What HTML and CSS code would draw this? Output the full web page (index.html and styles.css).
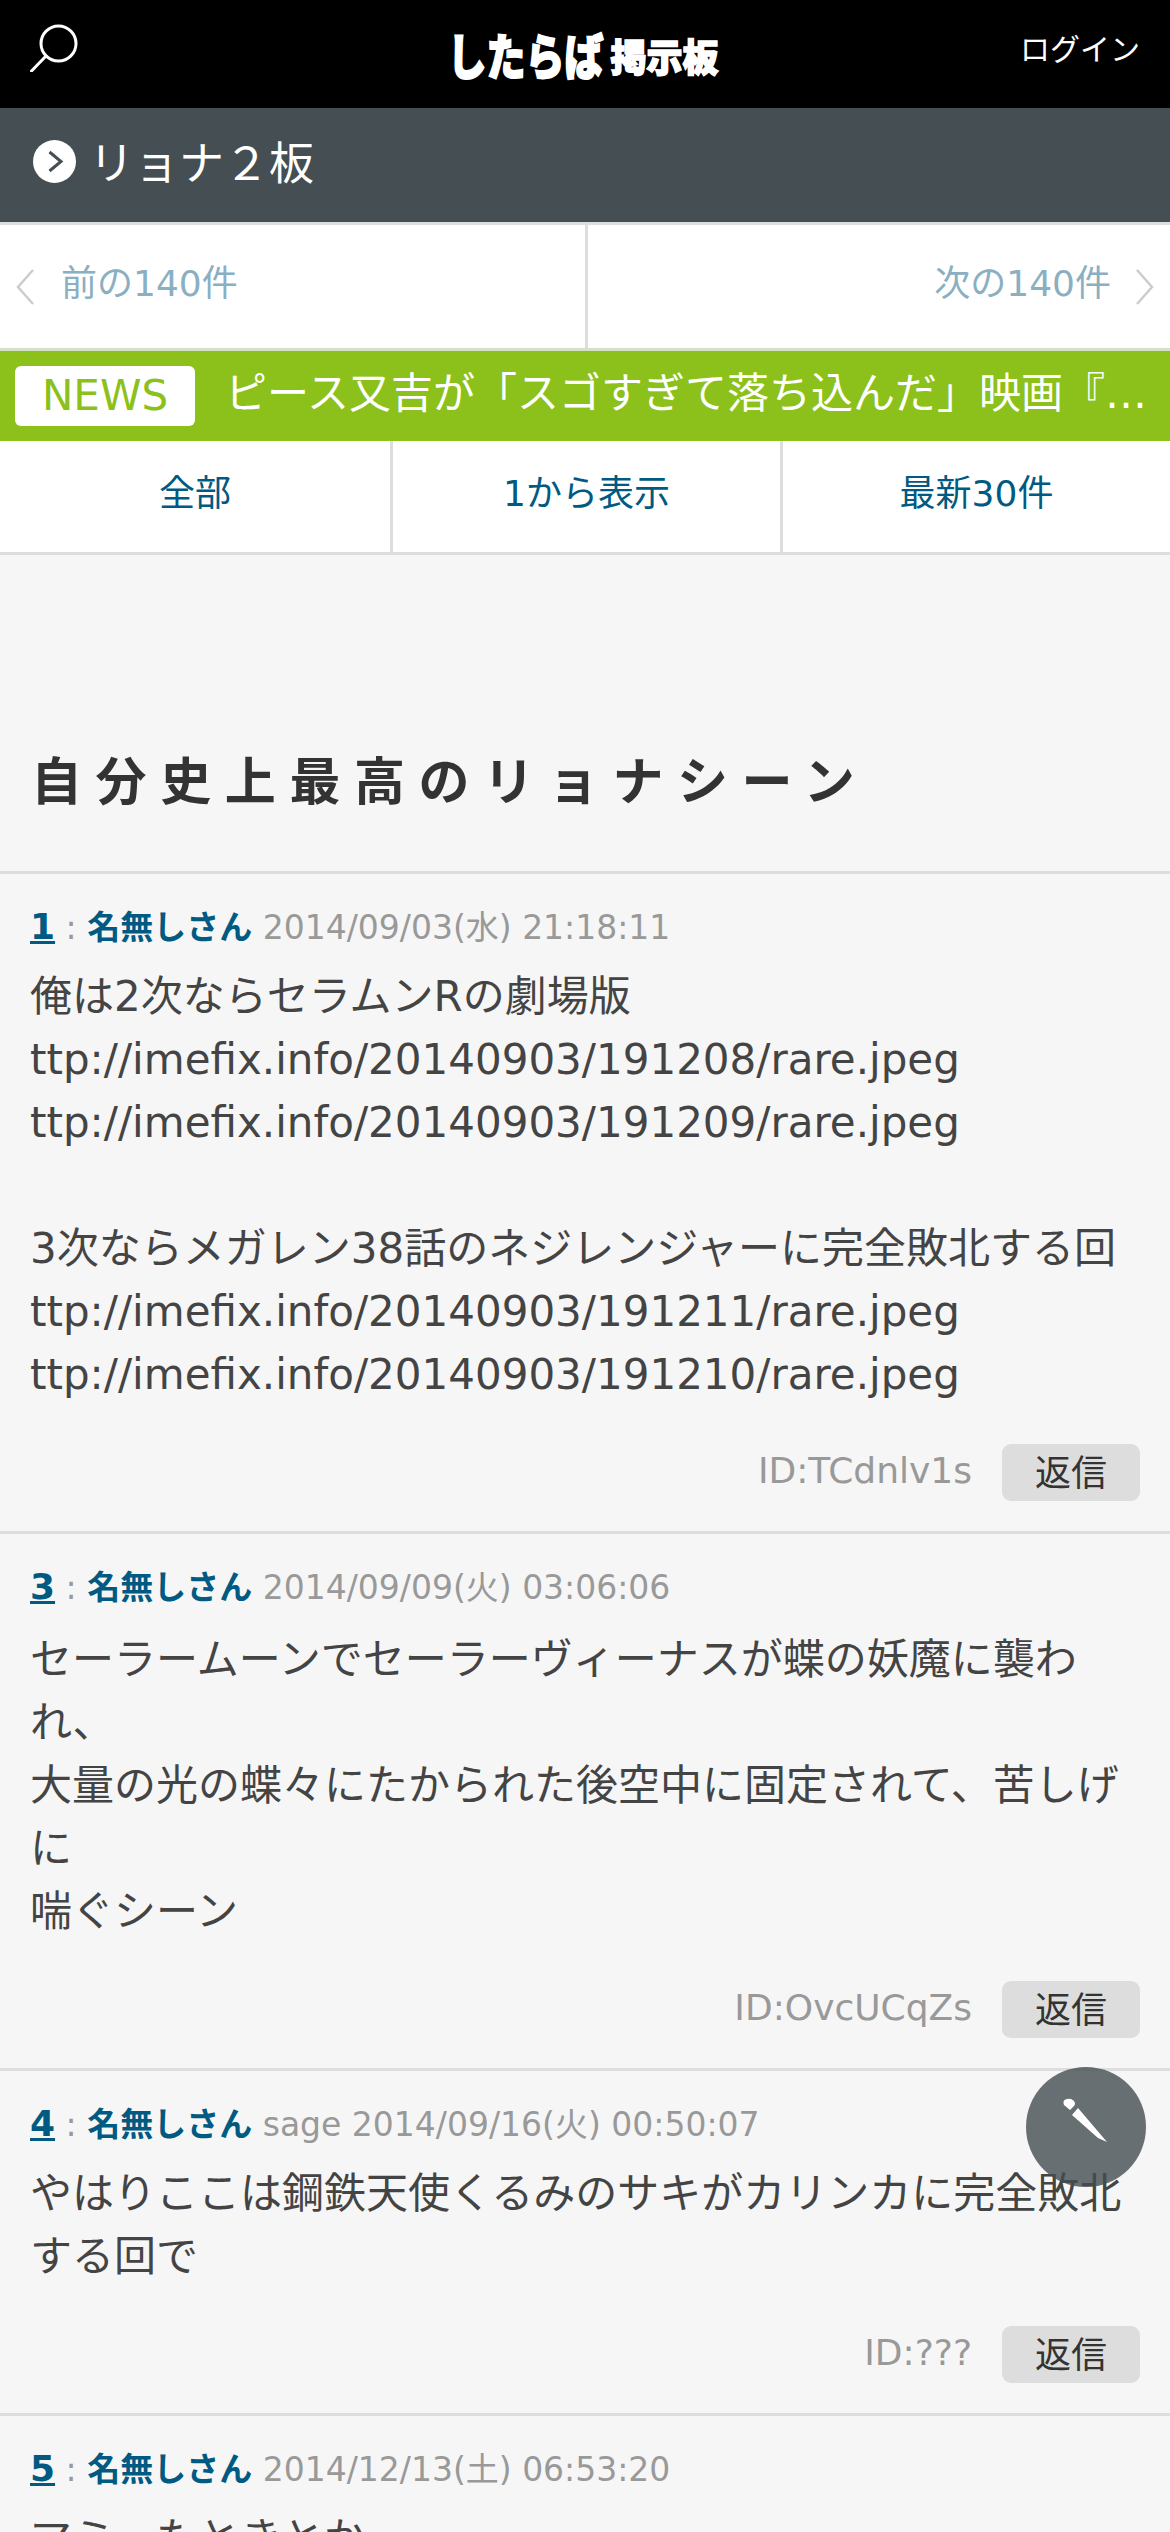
FILE: index.html
```html
<!DOCTYPE html>
<html lang="ja">
<head>
  <meta charset="UTF-8">
  <title>自分史上最高のリョナシーン</title>
  <link rel="stylesheet" href="styles.css">
</head>
<body>
  <header class="top">
    <svg class="search" viewBox="0 0 48 48" width="48" height="48" fill="none" stroke="#fff" stroke-width="3" stroke-linecap="round">
      <circle cx="28.5" cy="19.5" r="17.5"/>
      <path d="M16 32 L1.5 47"/>
    </svg>
    <div class="logo"><span class="logo-big">したらば</span><span class="logo-small">掲示板</span></div>
    <a class="login">ログイン</a>
  </header>

  <div class="board">
    <svg class="board-icon" viewBox="0 0 43 43" width="43" height="43">
      <circle cx="21.5" cy="21.5" r="21.5" fill="#fff"/>
      <path d="M16.5 12 L28 21.5 L16.5 31" fill="none" stroke="#444e53" stroke-width="3"/>
    </svg>
    <span class="board-name">リョナ２板</span>
  </div>

  <nav class="pager">
    <a class="pager-item">
      <svg viewBox="0 0 20 36" width="20" height="36" fill="none" stroke="#ccc" stroke-width="2.5"><path d="M18 1 L3 18 L18 35"/></svg>
      <span>前の140件</span>
    </a>
    <a class="pager-item pager-next">
      <span>次の140件</span>
      <svg viewBox="0 0 20 36" width="20" height="36" fill="none" stroke="#ccc" stroke-width="2.5"><path d="M2 1 L17 18 L2 35"/></svg>
    </a>
  </nav>

  <div class="news">
    <span class="news-label">NEWS</span>
    <span class="news-text">ピース又吉が「スゴすぎて落ち込んだ」映画『…</span>
  </div>

  <nav class="tabs">
    <a>全部</a>
    <a>1から表示</a>
    <a>最新30件</a>
  </nav>

  <h1 class="thread-title">自分史上最高のリョナシーン</h1>

  <article class="post">
    <div class="meta"><a class="num">1</a> <span class="colon">:</span> <b class="name">名無しさん</b> <span>2014/09/03(水) 21:18:11</span></div>
    <div class="body">俺は2次ならセラムンRの劇場版<br>ttp://imefix.info/20140903/191208/rare.jpeg<br>ttp://imefix.info/20140903/191209/rare.jpeg<br><br>3次ならメガレン38話のネジレンジャーに完全敗北する回<br>ttp://imefix.info/20140903/191211/rare.jpeg<br>ttp://imefix.info/20140903/191210/rare.jpeg</div>
    <div class="post-foot"><span class="uid">ID:TCdnlv1s</span><button class="reply">返信</button></div>
  </article>

  <article class="post post-tall">
    <div class="meta"><a class="num">3</a> <span class="colon">:</span> <b class="name">名無しさん</b> <span>2014/09/09(火) 03:06:06</span></div>
    <div class="body">セーラームーンでセーラーヴィーナスが蝶の妖魔に襲われ、<br>大量の光の蝶々にたかられた後空中に固定されて、苦しげに<br>喘ぐシーン</div>
    <div class="post-foot"><span class="uid">ID:OvcUCqZs</span><button class="reply">返信</button></div>
  </article>

  <article class="post">
    <div class="meta"><a class="num">4</a> <span class="colon">:</span> <b class="name">名無しさん</b> <span>sage 2014/09/16(火) 00:50:07</span></div>
    <div class="body">やはりここは鋼鉄天使くるみのサキがカリンカに完全敗北する回で</div>
    <div class="post-foot"><span class="uid">ID:???</span><button class="reply">返信</button></div>
  </article>

  <article class="post">
    <div class="meta"><a class="num">5</a> <span class="colon">:</span> <b class="name">名無しさん</b> <span>2014/12/13(土) 06:53:20</span></div>
    <div class="body">マミったときとか</div>
  </article>

  <button class="fab">
    <svg viewBox="0 0 120 120" width="120" height="120" fill="#fff">
      <path d="M38 38 Q36 33 41 32 Q45 31 48 34 Q50 37 48 39 L44 43 Z"/>
      <path d="M46 48 L52 41 L81 75 L72 71 Z"/>
    </svg>
  </button>
</body>
</html>
```
FILE: styles.css
```css
html, body {
  height: 2532px;
  overflow: hidden;
}

body {
  margin: 0;
  position: relative;
  background-color: #f6f6f6;
  color: #444;
  font-family: "DejaVu Sans", "Noto Sans CJK JP", sans-serif;
  font-size: 42px;
  line-height: 63px;
}

.top {
  height: 108px;
  background: #000;
  color: #fff;
  display: flex;
  align-items: center;
  justify-content: space-between;
  padding: 0 30px;
}

.search {
  margin-top: -12px;
}

.logo {
  display: flex;
  align-items: flex-end;
  margin-left: 68px;
  font-family: "Noto Sans CJK JP", sans-serif;
  font-weight: 900;
  line-height: 50px;
  -webkit-text-stroke: 1.5px #fff;
}

.logo-big {
  font-size: 39px;
  transform: scaleY(1.25);
}

.logo-small {
  font-size: 36px;
  margin-left: 7px;
  transform: scaleY(1.05);
}

.login {
  font-family: "Noto Sans CJK JP", sans-serif;
  font-size: 30px;
  line-height: 45px;
  margin-top: -13px;
}

.board {
  height: 114px;
  box-sizing: border-box;
  background: #444e53;
  color: #fff;
  display: flex;
  align-items: center;
  gap: 13px;
  padding: 0 33px 7px;
  font-family: "Noto Sans CJK JP", sans-serif;
  font-size: 45px;
}

.board-name {
  margin-top: -3px;
}

.pager {
  display: flex;
  height: 123px;
  background: #fff;
  border-top: 3px solid #dcdfe0;
  border-bottom: 3px solid #d5e0c8;
  font-size: 36px;
  color: #8aafc2;
}

.pager-item {
  width: 50%;
  box-sizing: border-box;
  display: flex;
  align-items: center;
  gap: 26px;
  padding: 0 15px;
}

.pager-item span {
  margin-top: -6px;
}

.pager-next {
  justify-content: flex-end;
  gap: 24px;
  border-left: 3px solid #ddd;
}

.news {
  height: 90px;
  background: #8bc11a;
  color: #fff;
  display: flex;
  align-items: center;
  padding: 0 15px;
  gap: 30px;
  white-space: nowrap;
}

.news-label {
  width: 180px;
  height: 60px;
  line-height: 60px;
  text-align: center;
  background: #fff;
  border-radius: 6px;
  color: #8bc11a;
  font-size: 42px;
}

.news-text {
  margin-top: -6px;
}

.tabs {
  display: flex;
  height: 111px;
  background: #fff;
  border-bottom: 3px solid #ddd;
  color: #005a82;
  font-size: 36px;
}

.tabs a {
  width: 33.34%;
  box-sizing: border-box;
  text-align: center;
  line-height: 105px;
}

.tabs a + a {
  border-left: 3px solid #ddd;
}

.thread-title {
  margin: 0;
  height: 316px;
  box-sizing: border-box;
  padding: 187px 31px 0;
  color: #333;
  font-family: "Noto Sans CJK JP", sans-serif;
  font-size: 51px;
  line-height: 72px;
  letter-spacing: 13.6px;
  font-weight: bold;
}

.post {
  border-top: 3px solid #ddd;
  padding: 30px;
}

.meta {
  font-size: 33px;
  line-height: 45px;
  margin-bottom: 15px;
  color: #999;
}

.post-tall .meta {
  margin-bottom: 18px;
}

.num {
  color: #005a82;
  font-size: 36px;
  font-weight: bold;
  text-decoration: underline;
}

.name {
  color: #005a82;
}

.body {
  font-size: 42px;
}

.post-foot {
  display: flex;
  justify-content: flex-end;
  align-items: center;
  gap: 30px;
  margin-top: 38px;
}

.uid {
  color: #999;
  font-size: 36px;
  line-height: 57px;
  margin-top: -4px;
}

.reply {
  width: 138px;
  height: 57px;
  padding: 0 0 8px;
  border: 0;
  border-radius: 9px;
  background: #ddd;
  color: #333;
  font-family: "Noto Sans CJK JP", sans-serif;
  font-size: 36px;
}

.fab {
  position: absolute;
  top: 2067px;
  left: 1026px;
  width: 120px;
  height: 120px;
  padding: 0;
  border: 0;
  border-radius: 50%;
  background: rgba(68, 78, 83, 0.8);
}

.fab svg {
  display: block;
}
```
